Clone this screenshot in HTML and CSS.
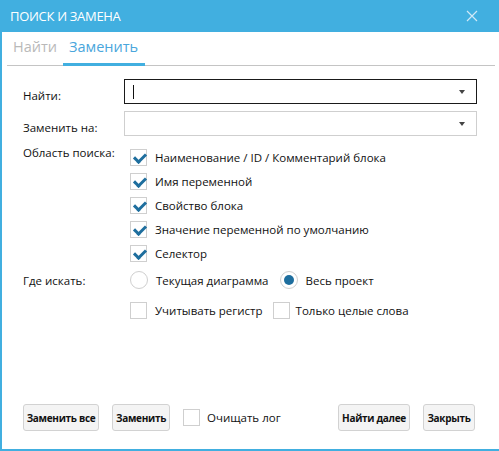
FILE: index.html
```html
<!DOCTYPE html>
<html lang="ru">
<head>
<meta charset="utf-8">
<title>Поиск и замена</title>
<link rel="stylesheet" href="styles.css">
</head>
<body>
<div class="window">
  <div class="titlebar">
    <span class="title">ПОИСК И ЗАМЕНА</span>
    <svg class="close" width="12" height="12" viewBox="0 0 12 12"><path d="M1 1L11 11M11 1L1 11" stroke="#cfe9f7" stroke-width="1.2" fill="none"/></svg>
  </div>
  <div class="body">
    <div class="tabs">
      <div class="tab">Найти</div>
      <div class="tab active">Заменить</div>
    </div>
    <div class="form">
      <label class="label label-mid">Найти:</label>
      <div class="combo focused"><span class="caret"></span><span class="arrow"></span></div>

      <label class="label label-mid">Заменить на:</label>
      <div class="combo"><span class="arrow"></span></div>

      <label class="label label-top">Область поиска:</label>
      <div class="checks">
        <div class="opt"><span class="cb checked"></span>Наименование / ID / Комментарий блока</div>
        <div class="opt"><span class="cb checked"></span>Имя переменной</div>
        <div class="opt"><span class="cb checked"></span>Свойство блока</div>
        <div class="opt"><span class="cb checked"></span>Значение переменной по умолчанию</div>
        <div class="opt"><span class="cb checked"></span>Селектор</div>
      </div>

      <label class="label label-mid where">Где искать:</label>
      <div class="radios">
        <div class="opt"><span class="rb"></span>Текущая диаграмма</div>
        <div class="opt"><span class="rb on"></span>Весь проект</div>
      </div>

      <span></span>
      <div class="flags">
        <div class="opt"><span class="cb"></span>Учитывать регистр</div>
        <div class="opt"><span class="cb"></span>Только целые слова</div>
      </div>
    </div>
    <div class="footer">
      <button class="btn btn-all">Заменить все</button>
      <button class="btn btn-one">Заменить</button>
      <div class="opt log"><span class="cb"></span>Очищать лог</div>
      <span class="spacer"></span>
      <button class="btn btn-next">Найти далее</button>
      <button class="btn btn-close">Закрыть</button>
    </div>
  </div>
</div>
</body>
</html>
```
FILE: styles.css
```css
* { box-sizing: border-box; }
html, body { margin: 0; padding: 0; background: #fff; }
body { font-family: "Open Sans", "Noto Sans", sans-serif; color: #111; }

.window {
  width: 499px;
  height: 451px;
  display: flex;
  flex-direction: column;
  border-left: 2px solid #41afe0;
  border-bottom: 2px solid #41afe0;
  overflow: hidden;
}

.titlebar {
  height: 32px;
  flex: none;
  background: #41afe0;
  margin-left: -2px;
  display: flex;
  align-items: center;
  justify-content: space-between;
  padding: 0 21px 0 10px;
}
.title { color: #fff; font-size: 13px; letter-spacing: -0.3px; }
.close { display: block; }

.body {
  flex: 1;
  display: flex;
  flex-direction: column;
  padding: 0 4px 0 5px;
}

.tabs {
  display: flex;
  height: 34px;
  border-bottom: 1px solid #c4c4c4;
  align-items: flex-end;
}
.tab {
  font-size: 14.5px;
  color: #b9b9b9;
  padding: 0 6px;
  height: 32px;
  line-height: 26px;
  border-bottom: 3px solid transparent;
  margin-bottom: -1px;
}
.tab.active { color: #4aa6dc; border-bottom-color: #41afe0; padding-right: 7px; }

.form {
  display: grid;
  grid-template-columns: 101px 353px;
  margin: 13px 0 0 16px;
  font-size: 11.5px;
  row-gap: 0;
}
.label { display: flex; }
.label-mid { align-items: center; }
.label-top { padding-top: 2px; }

.combo {
  height: 25px;
  border: 1px solid #cfcfcf;
  position: relative;
  display: flex;
  align-items: center;
  margin-bottom: 7px;
}
.combo.focused { border-color: #1a1a1a; }
.caret { width: 1px; height: 14px; background: #111; margin-left: 8px; }
.arrow {
  position: absolute;
  right: 11px;
  top: 10px;
  width: 0; height: 0;
  border-left: 3px solid transparent;
  border-right: 3px solid transparent;
  border-top: 4px solid #444;
}

.checks { display: flex; flex-direction: column; margin-top: 2px; }
.opt { display: flex; align-items: center; height: 24px; white-space: nowrap; }
.cb {
  width: 17px; height: 17px;
  border: 1px solid #cfcfcf;
  background: #fff;
  margin: 0 8px 0 6px;
  flex: none;
  position: relative;
}
.cb.checked::after {
  content: "";
  position: absolute;
  left: 5px; top: 1px;
  width: 5px; height: 9px;
  border: solid #1e6e9e;
  border-width: 0 3px 3px 0;
  transform: rotate(45deg);
}

.where { margin-top: 3px; height: 24px; }
.radios { display: flex; margin-top: 3px; }
.rb {
  width: 18px; height: 18px;
  border: 1px solid #cfcfcf;
  border-radius: 50%;
  margin: 0 8px 0 6px;
  flex: none;
  position: relative;
}
.rb.on::after {
  content: "";
  position: absolute;
  left: 3px; top: 3px;
  width: 10px; height: 10px;
  border-radius: 50%;
  background: #1e6e9e;
}
.radios .opt + .opt .rb { margin-left: 11px; }

.flags { display: flex; margin-top: 6px; }
.flags .opt + .opt .cb { margin-left: 10px; margin-right: 6px; }

.footer {
  margin-top: auto;
  margin-bottom: 18px;
  display: flex;
  align-items: center;
  padding: 0 20px 0 16px;
  gap: 13px;
}
.btn {
  font-family: "Open Sans", "Noto Sans", sans-serif;
  font-weight: 700;
  font-size: 10px;
  letter-spacing: -0.3px;
  white-space: nowrap;
  color: #111;
  height: 27px;
  padding: 0;
  text-align: center;
  background: #f4f4f4;
  border: 1px solid #d2d2d2;
  border-radius: 3px;
}
.btn-all { width: 76px; }
.btn-one { width: 58px; }
.btn-next { width: 72px; }
.btn-close { width: 52px; }
.log { font-size: 11.5px; }
.log .cb { margin: 0 7px 0 0; }
.spacer { flex: 1; }
```
